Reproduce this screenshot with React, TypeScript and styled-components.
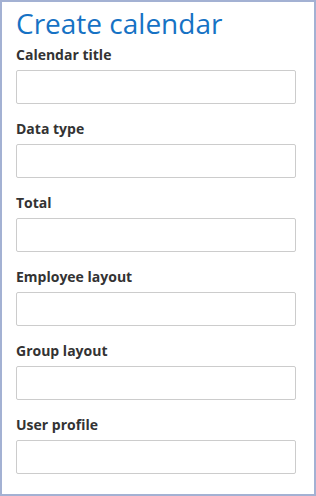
import React from 'react';
import styled, { createGlobalStyle } from 'styled-components';

const GlobalStyle = createGlobalStyle`
  html, body {
    margin: 0;
    padding: 0;
    background: #ffffff;
  }
  body {
    font-family: "Open Sans", "Liberation Sans", sans-serif;
  }
`;

const Frame = styled.div`
  box-sizing: border-box;
  width: 316px;
  height: 496px;
  border: 2px solid #a3b1d3;
  background: #ffffff;
  padding: 2px 18px 0 14px;
`;

const Title = styled.h1`
  margin: 0 0 3px;
  font-family: "Open Sans", "Liberation Sans", sans-serif;
  font-size: 28px;
  font-weight: 400;
  line-height: 38px;
  color: #1672c4;
`;

const Field = styled.div`
  display: flex;
  flex-direction: column;
  margin-bottom: 15px;
`;

const Label = styled.label`
  font-size: 14px;
  font-weight: 700;
  line-height: 20px;
  color: #333333;
  margin-bottom: 5px;
`;

const Input = styled.input`
  box-sizing: border-box;
  width: 280px;
  height: 34px;
  margin: 0;
  border: 1px solid #cccccc;
  border-radius: 2px;
  padding: 4px 8px;
  font-family: inherit;
  font-size: 14px;
  outline: none;
`;

const fields = [
  'Calendar title',
  'Data type',
  'Total',
  'Employee layout',
  'Group layout',
  'User profile',
];

const App: React.FC = () => (
  <>
    <GlobalStyle />
    <Frame>
      <Title>Create calendar</Title>
      {fields.map((f) => (
        <Field key={f}>
          <Label>{f}</Label>
          <Input type="text" />
        </Field>
      ))}
    </Frame>
  </>
);

export default App;
